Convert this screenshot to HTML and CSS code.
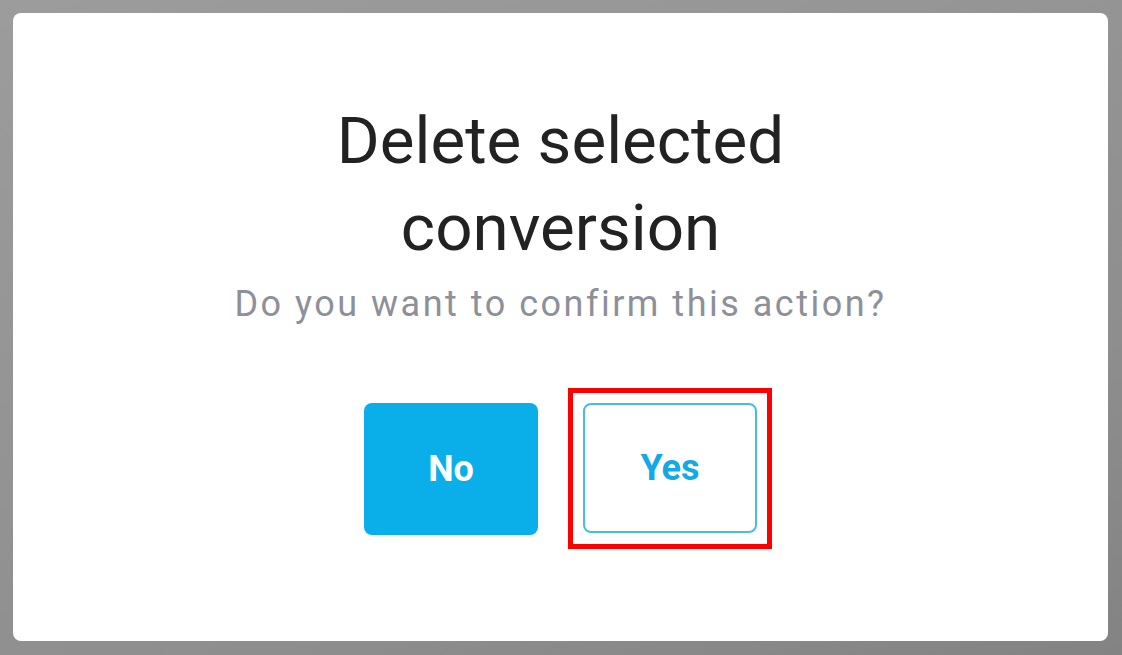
FILE: index.html
```html
<!DOCTYPE html>
<html>
<head>
<meta charset="utf-8">
<link rel="stylesheet" href="styles.css">
</head>
<body>
<div class="overlay">
  <div class="dialog">
    <h1 class="title">Delete selected<br>conversion</h1>
    <p class="subtitle">Do you want to confirm this action?</p>
    <div class="actions">
      <button class="btn btn-no">No</button>
      <button class="btn btn-yes">Yes</button>
    </div>
  </div>
</div>
</body>
</html>
```
FILE: styles.css
```css
html, body {
  margin: 0;
  padding: 0;
  height: 100%;
}
body {
  background: linear-gradient(160deg, #9c9c9c 0%, #8e8e8e 70%, #838383 100%);
  font-family: Roboto, "Liberation Sans", sans-serif;
}
.overlay {
  box-sizing: border-box;
  height: 655px;
  padding: 13px 14px 14px 13px;
}
.dialog {
  box-sizing: border-box;
  height: 628px;
  background: #fff;
  border-radius: 8px;
  display: flex;
  flex-direction: column;
  align-items: center;
  padding-top: 84px;
}
.title {
  margin: 0;
  font-weight: 400;
  font-size: 65.5px;
  line-height: 87px;
  color: #222222;
  text-align: center;
}
.subtitle {
  margin: 13px 0 0;
  font-size: 36px;
  line-height: 40px;
  letter-spacing: 2.5px;
  color: #8e9099;
}
.actions {
  display: flex;
  align-items: flex-start;
  gap: 45px;
  margin-top: 79px;
}
.btn {
  box-sizing: border-box;
  width: 174px;
  height: 132px;
  border-radius: 8px;
  font-family: Roboto, "Liberation Sans", sans-serif;
  font-weight: 700;
  font-size: 36px;
  cursor: pointer;
}
.btn-no {
  background: #0aaee8;
  border: none;
  color: #fff;
}
.btn-yes {
  position: relative;
  height: 130px;
  background: #fff;
  border: 2px solid #45bdec;
  color: #12aae6;
}
.btn-yes::after {
  content: "";
  position: absolute;
  box-sizing: border-box;
  top: -17px;
  left: -17px;
  right: -17px;
  bottom: -18px;
  border: 5px solid #ff0000;
  pointer-events: none;
}
```
